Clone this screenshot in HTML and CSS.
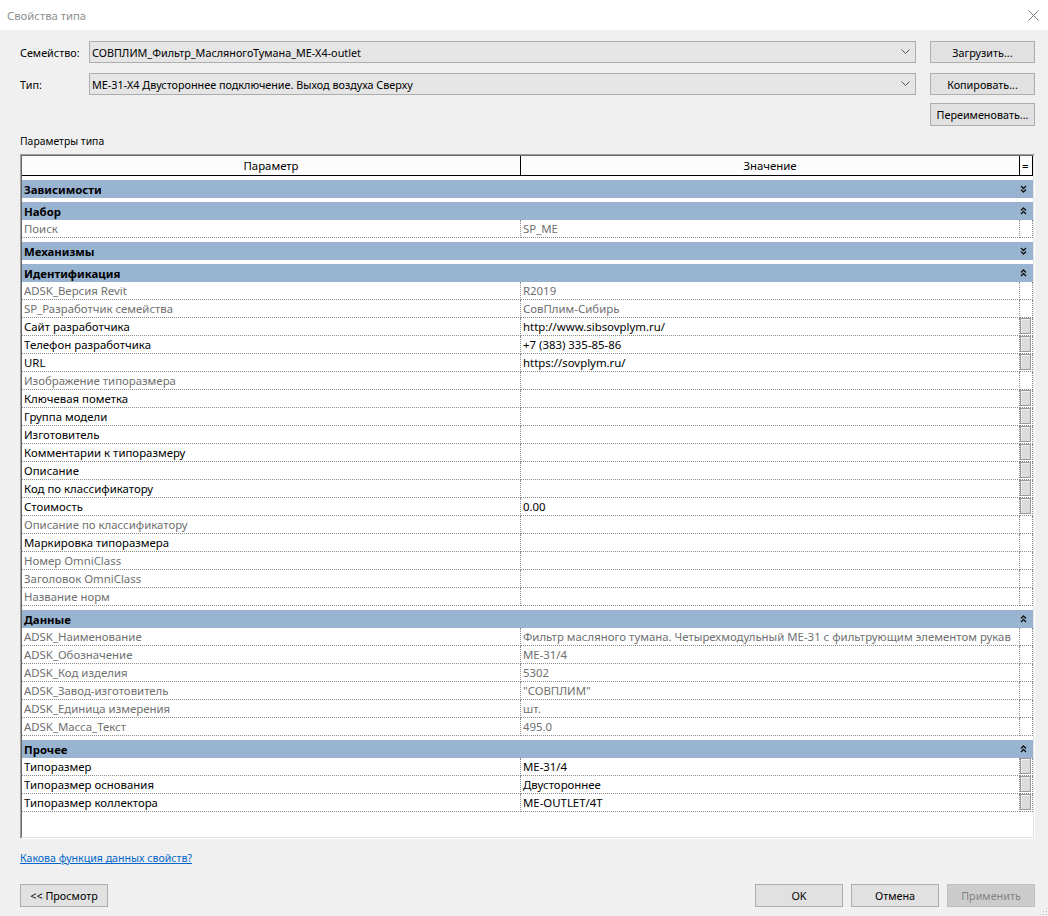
FILE: index.html
```html
<!DOCTYPE html>
<html lang="ru">
<head>
<meta charset="utf-8">
<title>Свойства типа</title>
<link rel="stylesheet" href="styles.css">
</head>
<body>
<div class="window">
  <div class="titlebar">
    <span class="title">Свойства типа</span>
    <svg class="close" width="11" height="11" viewBox="0 0 11 11"><path d="M0.5 0.5 L10.5 10.5 M10.5 0.5 L0.5 10.5" stroke="#7a7a7a" stroke-width="1" fill="none"/></svg>
  </div>
  <div class="body">
    <div class="field-row">
      <span class="field-label">Семейство:</span>
      <div class="combo"><span>СОВПЛИМ_Фильтр_МасляногоТумана_МЕ-Х4-outlet</span><svg width="9" height="6" viewBox="0 0 9 6"><path d="M0.5 0.5 L4.5 4.5 L8.5 0.5" stroke="#555" stroke-width="1" fill="none"/></svg></div>
      <button class="btn">Загрузить...</button>
    </div>
    <div class="field-row second">
      <span class="field-label">Тип:</span>
      <div class="combo"><span>МЕ-31-Х4 Двустороннее подключение. Выход воздуха Сверху</span><svg width="9" height="6" viewBox="0 0 9 6"><path d="M0.5 0.5 L4.5 4.5 L8.5 0.5" stroke="#555" stroke-width="1" fill="none"/></svg></div>
      <button class="btn">Копировать...</button>
    </div>
    <div class="rename-row"><button class="btn tall">Переименовать...</button></div>
    <div class="section-label">Параметры типа</div>
    <div class="grid-frame">
      <div class="grid-inner">
        <div class="grid-head">
          <div class="hcell">Параметр</div>
          <div class="hcell">Значение</div>
          <div class="hcell eq">=</div>
        </div>

        <div class="group"><span>Зависимости</span><svg class="chev" width="7" height="8" viewBox="0 0 7 8"><path d="M1 1 L3.5 3.5 L6 1 M1 4.5 L3.5 7 L6 4.5" stroke="#111" stroke-width="1.3" fill="none"/></svg></div>

        <div class="group"><span>Набор</span><svg class="chev" width="7" height="8" viewBox="0 0 7 8"><path d="M1 3.5 L3.5 1 L6 3.5 M1 7 L3.5 4.5 L6 7" stroke="#111" stroke-width="1.3" fill="none"/></svg></div>
        <div class="row ro"><div class="c1">Поиск</div><div class="c2">SP_ME</div><div class="c3"></div></div>

        <div class="group"><span>Механизмы</span><svg class="chev" width="7" height="8" viewBox="0 0 7 8"><path d="M1 1 L3.5 3.5 L6 1 M1 4.5 L3.5 7 L6 4.5" stroke="#111" stroke-width="1.3" fill="none"/></svg></div>

        <div class="group"><span>Идентификация</span><svg class="chev" width="7" height="8" viewBox="0 0 7 8"><path d="M1 3.5 L3.5 1 L6 3.5 M1 7 L3.5 4.5 L6 7" stroke="#111" stroke-width="1.3" fill="none"/></svg></div>
        <div class="row ro"><div class="c1">ADSK_Версия Revit</div><div class="c2">R2019</div><div class="c3"></div></div>
        <div class="row ro"><div class="c1">SP_Разработчик семейства</div><div class="c2">СовПлим-Сибирь</div><div class="c3"></div></div>
        <div class="row"><div class="c1">Сайт разработчика</div><div class="c2">http://www.sibsovplym.ru/</div><div class="c3"><span class="edit"></span></div></div>
        <div class="row"><div class="c1">Телефон разработчика</div><div class="c2">+7 (383) 335-85-86</div><div class="c3"><span class="edit"></span></div></div>
        <div class="row"><div class="c1">URL</div><div class="c2">https://sovplym.ru/</div><div class="c3"><span class="edit"></span></div></div>
        <div class="row ro"><div class="c1">Изображение типоразмера</div><div class="c2"></div><div class="c3"></div></div>
        <div class="row"><div class="c1">Ключевая пометка</div><div class="c2"></div><div class="c3"><span class="edit"></span></div></div>
        <div class="row"><div class="c1">Группа модели</div><div class="c2"></div><div class="c3"><span class="edit"></span></div></div>
        <div class="row"><div class="c1">Изготовитель</div><div class="c2"></div><div class="c3"><span class="edit"></span></div></div>
        <div class="row"><div class="c1">Комментарии к типоразмеру</div><div class="c2"></div><div class="c3"><span class="edit"></span></div></div>
        <div class="row"><div class="c1">Описание</div><div class="c2"></div><div class="c3"><span class="edit"></span></div></div>
        <div class="row"><div class="c1">Код по классификатору</div><div class="c2"></div><div class="c3"><span class="edit"></span></div></div>
        <div class="row"><div class="c1">Стоимость</div><div class="c2">0.00</div><div class="c3"><span class="edit"></span></div></div>
        <div class="row ro"><div class="c1">Описание по классификатору</div><div class="c2"></div><div class="c3"></div></div>
        <div class="row"><div class="c1">Маркировка типоразмера</div><div class="c2"></div><div class="c3"></div></div>
        <div class="row ro"><div class="c1">Номер OmniClass</div><div class="c2"></div><div class="c3"></div></div>
        <div class="row ro"><div class="c1">Заголовок OmniClass</div><div class="c2"></div><div class="c3"></div></div>
        <div class="row ro"><div class="c1">Название норм</div><div class="c2"></div><div class="c3"></div></div>

        <div class="group"><span>Данные</span><svg class="chev" width="7" height="8" viewBox="0 0 7 8"><path d="M1 3.5 L3.5 1 L6 3.5 M1 7 L3.5 4.5 L6 7" stroke="#111" stroke-width="1.3" fill="none"/></svg></div>
        <div class="row ro"><div class="c1">ADSK_Наименование</div><div class="c2">Фильтр масляного тумана. Четырехмодульный МЕ-31 с фильтрующим элементом рукав</div><div class="c3"></div></div>
        <div class="row ro"><div class="c1">ADSK_Обозначение</div><div class="c2">МЕ-31/4</div><div class="c3"></div></div>
        <div class="row ro"><div class="c1">ADSK_Код изделия</div><div class="c2">5302</div><div class="c3"></div></div>
        <div class="row ro"><div class="c1">ADSK_Завод-изготовитель</div><div class="c2">"СОВПЛИМ"</div><div class="c3"></div></div>
        <div class="row ro"><div class="c1">ADSK_Единица измерения</div><div class="c2">шт.</div><div class="c3"></div></div>
        <div class="row ro"><div class="c1">ADSK_Масса_Текст</div><div class="c2">495.0</div><div class="c3"></div></div>

        <div class="group"><span>Прочее</span><svg class="chev" width="7" height="8" viewBox="0 0 7 8"><path d="M1 3.5 L3.5 1 L6 3.5 M1 7 L3.5 4.5 L6 7" stroke="#111" stroke-width="1.3" fill="none"/></svg></div>
        <div class="row"><div class="c1">Типоразмер</div><div class="c2">МЕ-31/4</div><div class="c3"><span class="edit"></span></div></div>
        <div class="row"><div class="c1">Типоразмер основания</div><div class="c2">Двустороннее</div><div class="c3"><span class="edit"></span></div></div>
        <div class="row"><div class="c1">Типоразмер коллектора</div><div class="c2">МЕ-OUTLET/4T</div><div class="c3"><span class="edit"></span></div></div>
      </div>
    </div>
    <a class="help" href="#">Какова функция данных свойств?</a>
    <div class="footer">
      <button class="btn fbtn">&lt;&lt; Просмотр</button>
      <div class="footer-right">
        <button class="btn fbtn">OK</button>
        <button class="btn fbtn">Отмена</button>
        <button class="btn fbtn disabled">Применить</button>
      </div>
    </div>
  </div>
  <svg class="grip" width="9" height="9" viewBox="0 0 9 9"><g fill="#b8b8b8"><rect x="7" y="1" width="1" height="1"/><rect x="4" y="4" width="1" height="1"/><rect x="7" y="4" width="1" height="1"/><rect x="1" y="7" width="1" height="1"/><rect x="4" y="7" width="1" height="1"/><rect x="7" y="7" width="1" height="1"/></g></svg>
</div>
</body>
</html>
```

FILE: styles.css
```css
* { box-sizing: border-box; }

body {
  margin: 0;
  background: #f0f0f0;
  font-family: "Noto Sans", "Open Sans", sans-serif;
  font-size: 10.8px;
  color: #000;
}

.window {
  position: relative;
  width: 1048px;
  height: 916px;
  display: flex;
  flex-direction: column;
  background: #f0f0f0;
  overflow: hidden;
}

.titlebar {
  height: 30px;
  background: #fff;
  display: flex;
  align-items: center;
  justify-content: space-between;
  padding: 0 9px 0 7px;
}

.title {
  color: #8f8f8f;
  font-size: 11.3px;
}

.close { display: block; margin-top: 1px; }

.body {
  flex: 1;
  display: flex;
  flex-direction: column;
  padding: 11px 13px 0 20px;
}

.field-row {
  display: flex;
  align-items: center;
  height: 22px;
  margin-bottom: 10px;
}

.field-row.second { margin-bottom: 8px; }

.field-label { width: 69px; }

.combo {
  width: 827px;
  height: 22px;
  border: 1px solid #adadad;
  background: #e5e5e5;
  display: flex;
  align-items: center;
  justify-content: space-between;
  padding: 0 5px 0 2px;
}

.btn {
  width: 105px;
  height: 22px;
  margin-left: 14px;
  border: 1px solid #adadad;
  background: #e1e1e1;
  font: inherit;
  color: #000;
  padding: 0;
}

.btn.tall { height: 23px; margin-left: 0; }

.rename-row {
  display: flex;
  justify-content: flex-end;
  height: 23px;
}

.section-label {
  margin-top: 8px;
  line-height: 14px;
  height: 14px;
  font-size: 10.4px;
}

.grid-frame {
  margin-top: 6px;
  height: 685px;
  border-style: solid;
  border-width: 1px;
  border-color: #a0a0a0 #ffffff #ffffff #a0a0a0;
}

.grid-inner {
  height: 100%;
  background: #fff;
  border-style: solid;
  border-width: 1px;
  border-color: #696969 #e3e3e3 #e3e3e3 #696969;
  overflow: hidden;
  font-size: 11.4px;
}

.grid-head {
  display: grid;
  grid-template-columns: 499px 499px 13px;
  height: 20px;
  border-bottom: 1px solid #000;
  background: #fcfcfc;
}

.hcell {
  border-right: 1px solid #000;
  display: flex;
  align-items: center;
  justify-content: center;
  line-height: 19px;
}

.hcell.eq { justify-content: flex-start; padding-left: 2px; }

.group {
  margin-top: 4px;
  height: 18px;
  background: #99b4d1;
  display: flex;
  align-items: center;
  justify-content: space-between;
  padding: 0 6px 0 2px;
  font-weight: bold;
}

.chev { display: block; }

.row {
  display: grid;
  grid-template-columns: 499px 499px 13px;
  height: 18px;
}

.row > div {
  border-right: 1px dotted #8c8c8c;
  border-bottom: 1px dotted #8c8c8c;
  white-space: nowrap;
  overflow: hidden;
  line-height: 17px;
}

.c1, .c2 { padding-left: 2px; }

.row.ro .c1, .row.ro .c2 { color: #6f6f6f; }

.edit {
  display: block;
  width: 11px;
  height: 16px;
  border: 1px solid #9a9a9a;
  background: #dcdcdc;
  box-shadow: inset 1px 1px 0 #eeeeee;
}

.help {
  margin-top: 12px;
  line-height: 14px;
  height: 14px;
  color: #0066cc;
  text-decoration: underline;
  align-self: flex-start;
  font-size: 10.6px;
}

.footer {
  margin-top: 19px;
  display: flex;
  justify-content: space-between;
  align-items: center;
}

.footer-right {
  display: flex;
  gap: 8px;
}

.fbtn {
  width: 88px;
  height: 23px;
  margin-left: 0;
}

.fbtn.disabled {
  background: #cccccc;
  border-color: #bfbfbf;
  color: #838383;
}

.grip {
  position: absolute;
  right: 0;
  bottom: 0;
}
```
